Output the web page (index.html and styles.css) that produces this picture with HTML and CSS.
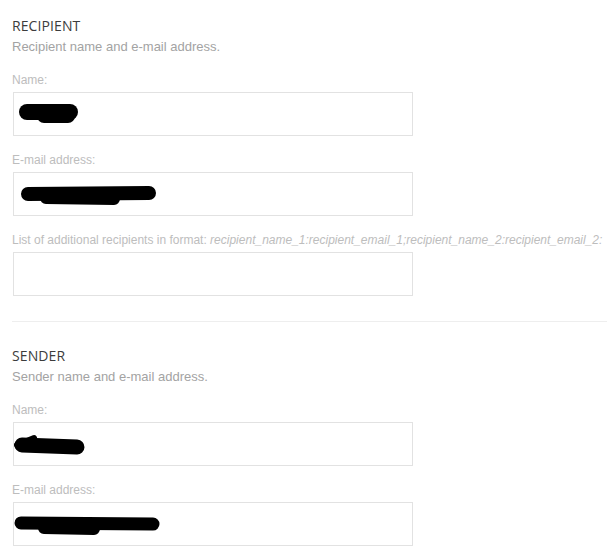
FILE: index.html
```html
<!DOCTYPE html>
<html>
<head>
<meta charset="utf-8">
<link rel="stylesheet" href="styles.css">
</head>
<body>
<div class="page">
  <section class="section">
    <h2 class="title">RECIPIENT</h2>
    <p class="desc">Recipient name and e-mail address.</p>
    <div class="field">
      <label class="label">Name:</label>
      <div class="input">
        <svg class="redact" width="80" height="42" viewBox="0 0 80 42"><path d="M13 19 L56 19" stroke="#000" stroke-width="16" stroke-linecap="round" fill="none"/><path d="M30 23 L54 23" stroke="#000" stroke-width="14" stroke-linecap="round" fill="none"/></svg>
      </div>
    </div>
    <div class="field">
      <label class="label">E-mail address:</label>
      <div class="input">
        <svg class="redact" width="150" height="42" viewBox="0 0 150 42"><path d="M14 21 L135 20" stroke="#000" stroke-width="14" stroke-linecap="round" fill="none"/><path d="M32 25 L100 26" stroke="#000" stroke-width="12" stroke-linecap="round" fill="none"/></svg>
      </div>
    </div>
    <div class="field">
      <label class="label">List of additional recipients in format: <em>recipient_name_1:recipient_email_1;recipient_name_2:recipient_email_2:</em></label>
      <div class="input"></div>
    </div>
  </section>
  <hr class="divider">
  <section class="section">
    <h2 class="title">SENDER</h2>
    <p class="desc">Sender name and e-mail address.</p>
    <div class="field">
      <label class="label">Name:</label>
      <div class="input">
        <svg class="redact" width="80" height="42" viewBox="0 0 80 42"><path d="M8 22 L63 24" stroke="#000" stroke-width="15" stroke-linecap="round" fill="none"/><path d="M3 22 L20 15" stroke="#000" stroke-width="6" stroke-linecap="round" fill="none"/></svg>
      </div>
    </div>
    <div class="field">
      <label class="label">E-mail address:</label>
      <div class="input">
        <svg class="redact" width="150" height="42" viewBox="0 0 150 42"><path d="M7 20 L139 21" stroke="#000" stroke-width="13" stroke-linecap="round" fill="none"/><path d="M30 25 L80 26" stroke="#000" stroke-width="12" stroke-linecap="round" fill="none"/></svg>
      </div>
    </div>
  </section>
</div>
</body>
</html>
```

FILE: styles.css
```css
html, body {
  margin: 0;
  padding: 0;
  background: #fff;
}
.page {
  padding: 16px 0 0 12px;
  font-family: "Liberation Sans", Arial, sans-serif;
}
.section {
  margin: 0;
}
.title {
  margin: 0;
  font-family: "Open Sans", "Noto Sans", sans-serif;
  font-weight: 400;
  font-size: 14px;
  line-height: 20px;
  color: #3c3c3c;
  letter-spacing: 0.1px;
}
.desc {
  margin: 1.5px 0 0;
  font-size: 13px;
  line-height: 18px;
  color: #a3a3a3;
}
.field {
  margin-top: 17.5px;
}
.field + .field {
  margin-top: 17px;
}
.label {
  display: block;
  font-size: 12px;
  line-height: 14px;
  color: #bdbdbd;
  margin-bottom: 5px;
  white-space: nowrap;
}
.label em {
  font-style: italic;
}
.input {
  margin-left: 1px;
  width: 400px;
  height: 44px;
  box-sizing: border-box;
  border: 1px solid #e2e2e2;
  background: #fff;
  display: flex;
  align-items: center;
}
.redact {
  display: block;
}
.divider {
  border: 0;
  border-top: 1px solid #eeeeee;
  margin: 25px 0 24px;
  height: 0;
}
```
